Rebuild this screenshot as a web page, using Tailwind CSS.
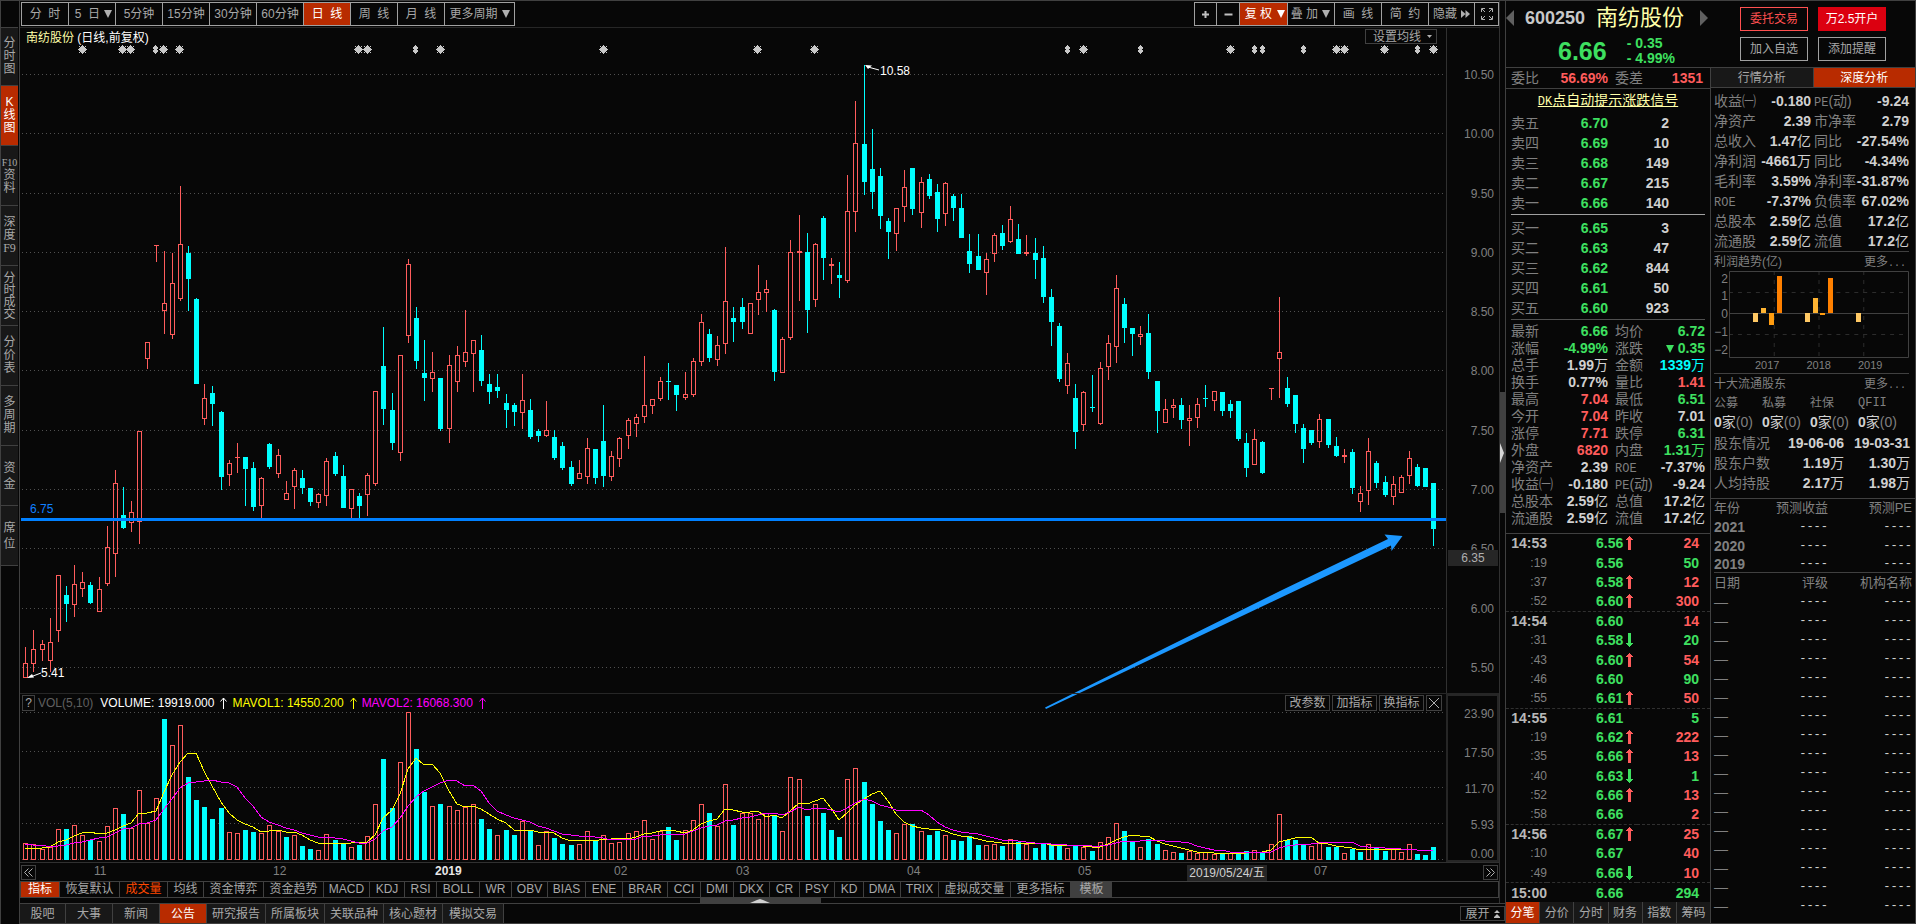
<!DOCTYPE html>
<html lang="zh-CN">
<head>
<meta charset="utf-8">
<title>南纺股份 600250</title>
<script src="https://cdn.jsdelivr.net/npm/@tailwindcss/browser@4"></script>
</head>
<body class="flex h-screen overflow-hidden border-t border-[#404040] bg-[#070707] font-['Liberation_Sans','Noto_Sans_CJK_SC',sans-serif] text-xs leading-4 text-[#a8a8a8]">

<!-- left rail -->
<nav class="flex w-5 shrink-0 flex-col border-x border-[#404040] pr-px text-center leading-[13px]">
  <div class="h-[27px] shrink-0 border-b border-[#404040]"></div>
  <button class="flex h-[58px] w-full items-center justify-center border-b border-[#404040] bg-[#181818] px-[2px]">分时图</button>
  <button class="flex h-[60px] w-full items-center justify-center border-b border-[#404040] bg-[#b82b00] px-[2px] text-white"><span>K<br>线图</span></button>
  <button class="flex h-[60px] w-full flex-col items-center justify-center border-b border-[#404040] bg-[#181818]"><span class="font-['Liberation_Serif'] text-[10px] leading-3">F10</span><span class="px-[2px]">资料</span></button>
  <button class="flex h-[60px] w-full flex-col items-center justify-center border-b border-[#404040] bg-[#181818]"><span class="px-[2px]">深度</span><span class="font-['Liberation_Serif']">F9</span></button>
  <button class="flex h-[60px] w-full items-center justify-center border-b border-[#404040] bg-[#181818] px-[2px] leading-3">分时成交</button>
  <button class="flex h-[60px] w-full items-center justify-center border-b border-[#404040] bg-[#181818] px-[2px]">分价表</button>
  <button class="flex h-[60px] w-full items-center justify-center border-b border-[#404040] bg-[#181818] px-[2px]">多周期</button>
  <button class="flex h-[60px] w-full items-center justify-center border-b border-[#404040] bg-[#181818] px-[2px] leading-4">资金</button>
  <button class="flex h-[60px] w-full items-center justify-center border-b border-[#404040] bg-[#181818] px-[2px] leading-4">席位</button>
</nav>

<main class="flex min-w-0 flex-1 flex-col border-b border-[#404040]">
 <div class="flex min-h-0 flex-1">
 <div class="flex min-w-0 flex-1 flex-col border-r border-[#303030]">
  <!-- toolbar -->
  <header class="flex h-[27px] shrink-0 items-start justify-between border-b border-[#262626] pl-px pt-px text-[#a8a8a8]">
    <div class="flex h-6 divide-x divide-[#a0a0a0] border border-[#a0a0a0]">
      <button class="w-[47px] whitespace-pre">分  时</button>
      <button class="flex w-[47px] items-center justify-end gap-1 whitespace-pre pr-[3px]"><span>5  日</span><svg class="size-2" viewBox="0 0 8 8" fill="#b0b0b0"><path d="M0 0h8L4 8z"/></svg></button>
      <button class="w-[47px]">5分钟</button>
      <button class="w-[47px]">15分钟</button>
      <button class="w-[47px]">30分钟</button>
      <button class="w-[47px]">60分钟</button>
      <button class="w-[47px] whitespace-pre bg-[#b82b00] text-white">日  线</button>
      <button class="w-[47px] whitespace-pre">周  线</button>
      <button class="w-[47px] whitespace-pre">月  线</button>
      <button class="flex w-[69px] items-center justify-center gap-1 whitespace-nowrap">更多周期<svg class="size-2" viewBox="0 0 8 8" fill="#b0b0b0"><path d="M0 0h8L4 8z"/></svg></button>
    </div>
    <div class="flex h-6 divide-x divide-[#a0a0a0] border border-[#a0a0a0]">
      <button class="flex w-[22px] items-center justify-center" aria-label="放大"><svg class="size-[9px]" viewBox="0 0 9 9" fill="#c0c0c0"><path d="M3.5 1h2v2.500h2.500v2h-2.500v2.500h-2v-2.500h-2.500v-2h2.500z"/></svg></button>
      <button class="flex w-[23px] items-center justify-center" aria-label="缩小"><svg class="size-[9px]" viewBox="0 0 9 9" fill="#c0c0c0"><path d="M.5 3.500h8v2h-8z"/></svg></button>
      <button class="flex w-[48px] items-center justify-end gap-[5px] whitespace-nowrap bg-[#b82b00] pr-[2px] text-white">复 权<svg class="size-2" viewBox="0 0 8 8" fill="#fff"><path d="M0 0h8L4 8z"/></svg></button>
      <button class="flex w-[47px] items-center justify-end gap-1 whitespace-nowrap pr-1">叠 加<svg class="size-2" viewBox="0 0 8 8" fill="#b0b0b0"><path d="M0 0h8L4 8z"/></svg></button>
      <button class="w-[47px] whitespace-pre">画  线</button>
      <button class="w-[47px] whitespace-pre">简  约</button>
      <button class="flex w-[46px] items-center justify-center gap-1">隐藏<svg class="h-2 w-[9px]" viewBox="0 0 9 8" fill="#b0b0b0"><path d="M0 0l4.500 4L0 8zM4.500 0L9 4 4.500 8z"/></svg></button>
      <button class="flex w-[23px] items-center justify-center" aria-label="全屏"><svg class="size-3" viewBox="0 0 12 12" fill="none" stroke="#b0b0b0"><path d="M.5 4V.5H4M1 1l3 3M8 .5h3.500V4M11 1L8 4M.5 8v3.500H4M1 11l3-3M11.500 8v3.500H8M11 11L8 8"/></svg></button>
    </div>
  </header>

  <!-- price and volume panes -->
  <div class="relative flex min-h-0 flex-1 flex-col">
    <div class="absolute inset-y-0 left-0 right-[53px]">
      <svg id="chart" class="h-full w-full" viewBox="20 28 1426 835" preserveAspectRatio="none" shape-rendering="crispEdges"></svg>
    </div>
    <div class="relative flex min-h-0 flex-1 border-b border-[#262626]">
      <div class="relative min-w-0 flex-1 pl-[6px]">
        <div class="flex items-start justify-between pr-[9px]">
          <h1 class="pt-[2px] text-[#ffffa8]">南纺股份 <span class="text-white">(日线,前复权)</span></h1>
          <button class="mt-px flex h-[15px] w-[72px] items-center justify-center gap-[6px] border border-[#404040] pl-[3px]">设置均线<svg class="h-[3px] w-[5px]" viewBox="0 0 5 3" fill="#b0b0b0"><path d="M0 0h5L2.500 3z"/></svg></button>
        </div>
        <span class="absolute left-[860px] top-[35px] text-white">10.58</span>
        <span class="absolute left-[10px] top-[473px] text-[#1080ff]">6.75</span>
        <span class="absolute left-[21px] top-[637px] text-white">5.41</span>
      </div>
      <div class="relative w-[53px] border-l border-[#303030] text-right text-[#808080]">
        <span class="absolute right-[5px] top-[39px]">10.50</span>
        <span class="absolute right-[5px] top-[98px]">10.00</span>
        <span class="absolute right-[5px] top-[158px]">9.50</span>
        <span class="absolute right-[5px] top-[217px]">9.00</span>
        <span class="absolute right-[5px] top-[276px]">8.50</span>
        <span class="absolute right-[5px] top-[335px]">8.00</span>
        <span class="absolute right-[5px] top-[395px]">7.50</span>
        <span class="absolute right-[5px] top-[454px]">7.00</span>
        <span class="absolute right-[5px] top-[513px]">6.50</span>
        <span class="absolute right-[5px] top-[573px]">6.00</span>
        <span class="absolute right-[5px] top-[632px]">5.50</span>
        <span class="absolute left-px right-px top-[522px] z-10 h-4 bg-[#262626] text-center text-[#b0b0b0]">6.35</span>
      </div>
    </div>
    <div class="relative flex h-[169px] shrink-0 border-b border-[#303030]">
      <div class="flex min-w-0 flex-1 items-start justify-between pl-[2px] pr-1 pt-px">
        <div class="flex items-center gap-[3px] whitespace-nowrap">
          <button class="h-4 w-[13px] border border-[#404040] leading-[14px]">?</button>
          <span class="text-[#606060]">VOL(5,10)</span>
          <span class="ml-1 text-white">VOLUME: 19919.000</span>
          <svg class="ml-[3px] h-3 w-[7px]" viewBox="0 0 7 12" fill="none" stroke="#fff"><path d="M3.500 12V1M.5 4.500l3-3.500 3 3.500"/></svg>
          <span class="ml-[2px] text-[#ff0]">MAVOL1: 14550.200</span>
          <svg class="ml-[3px] h-3 w-[7px]" viewBox="0 0 7 12" fill="none" stroke="#ff0"><path d="M3.500 12V1M.5 4.500l3-3.500 3 3.500"/></svg>
          <span class="ml-[2px] text-[#f0f]">MAVOL2: 16068.300</span>
          <svg class="ml-[3px] h-3 w-[7px]" viewBox="0 0 7 12" fill="none" stroke="#f0f"><path d="M3.500 12V1M.5 4.500l3-3.500 3 3.500"/></svg>
        </div>
        <div class="flex gap-[2px]">
          <button class="h-4 w-[45px] border border-[#404040] leading-[14px]">改参数</button>
          <button class="h-4 w-[45px] border border-[#404040] leading-[14px]">加指标</button>
          <button class="h-4 w-[45px] border border-[#404040] leading-[14px]">换指标</button>
          <button class="flex h-4 w-4 items-center justify-center border border-[#404040]" aria-label="关闭"><svg class="size-[10px]" viewBox="0 0 10 10" stroke="#b0b0b0"><path d="M0 0l10 10M10 0L0 10"/></svg></button>
        </div>
      </div>
      <div class="relative w-[53px] border-2 border-[#262626] text-[#808080]">
        <span class="absolute right-[3px] top-[10px]">23.90</span>
        <span class="absolute right-[3px] top-[49px]">17.50</span>
        <span class="absolute right-[3px] top-[85px]">11.70</span>
        <span class="absolute right-[3px] top-[121px]">5.93</span>
        <span class="absolute right-[3px] top-[150px]">0.00</span>
      </div>
    </div>
  </div>

  <!-- date axis -->
  <div class="relative flex h-[18px] shrink-0 items-center justify-between px-px text-[#808080]">
    <button class="flex h-[15px] w-[15px] items-center justify-center border border-[#404040]" aria-label="向左"><svg class="size-[9px]" viewBox="0 0 9 9" fill="none" stroke="#b0b0b0"><path d="M4.500.5l-4 4 4 4M8.500.5l-4 4 4 4"/></svg></button>
    <span class="absolute left-[74px] top-0">11</span>
    <span class="absolute left-[253px] top-0">12</span>
    <span class="absolute left-[415px] top-0 font-bold text-[#e8e8e8]">2019</span>
    <span class="absolute left-[594px] top-0">02</span>
    <span class="absolute left-[716px] top-0">03</span>
    <span class="absolute left-[887px] top-0">04</span>
    <span class="absolute left-[1058px] top-0">05</span>
    <span class="absolute left-[1294px] top-0">07</span>
    <span class="absolute left-[1167px] top-[2px] w-20 bg-[#262626] text-center text-[#d0d0d0]">2019/05/24/五</span>
    <button class="flex h-[15px] w-[15px] items-center justify-center border border-[#404040]" aria-label="向右"><svg class="size-[9px]" viewBox="0 0 9 9" fill="none" stroke="#b0b0b0"><path d="M.5.5l4 4-4 4M4.500.5l4 4-4 4"/></svg></button>
  </div>

  <!-- indicator tabs -->
  <div class="flex h-[17px] shrink-0 divide-x divide-[#404040] whitespace-nowrap border border-[#404040] leading-[15px]">
    <button class="w-[39px] bg-[#b82b00] text-white">指标</button>
    <button class="w-[60px]">恢复默认</button>
    <button class="w-12 text-[#ff4800]">成交量</button>
    <button class="w-9">均线</button>
    <button class="w-[60px]">资金博弈</button>
    <button class="w-[60px]">资金趋势</button>
    <button class="w-[46px]">MACD</button>
    <button class="w-[35px]">KDJ</button>
    <button class="w-8">RSI</button>
    <button class="w-[43px]">BOLL</button>
    <button class="w-8">WR</button>
    <button class="w-9">OBV</button>
    <button class="w-[38px]">BIAS</button>
    <button class="w-[37px]">ENE</button>
    <button class="w-[45px]">BRAR</button>
    <button class="w-[33px]">CCI</button>
    <button class="w-[33px]">DMI</button>
    <button class="w-9">DKX</button>
    <button class="w-[30px]">CR</button>
    <button class="w-[35px]">PSY</button>
    <button class="w-[29px]">KD</button>
    <button class="w-[37px]">DMA</button>
    <button class="w-[38px]">TRIX</button>
    <button class="w-[72px]">虚拟成交量</button>
    <button class="w-[60px]">更多指标</button>
    <button class="w-[41px] bg-[#404040]">模板</button>
  </div>
  <div class="flex h-[5px] shrink-0 justify-center pl-px">
    <button class="flex h-full w-[121px] items-end justify-center bg-[#404040]" aria-label="收起"><svg class="h-1 w-5" viewBox="0 0 20 4" fill="#d0d0d0"><path d="M0 4L7 1l3-1 3 1 7 3z"/></svg></button>
  </div>
 </div>
 <!-- side handle -->
 <div class="flex w-[5px] shrink-0 flex-col pt-[391px]">
   <button class="flex h-[121px] items-center bg-[#404040]" aria-label="展开侧栏"><svg class="h-5 w-[5px]" viewBox="0 0 5 20" fill="#d8d8d8"><path d="M0 0l2 5 2 5-2 5-2 5z"/></svg></button>
 </div>
 </div>

  <!-- bottom tabs -->
  <footer class="flex h-5 shrink-0 items-stretch justify-between border-t border-[#404040]">
    <div class="flex divide-x divide-[#404040] border-r border-[#404040] bg-[#181818]">
      <button class="w-[46px]">股吧</button>
      <button class="w-[47px]">大事</button>
      <button class="w-[47px]">新闻</button>
      <button class="w-[47px] bg-[#b82b00] text-white">公告</button>
      <button class="w-[59px]">研究报告</button>
      <button class="w-[59px]">所属板块</button>
      <button class="w-[59px]">关联品种</button>
      <button class="w-[59px]">核心题材</button>
      <button class="w-[60px]">模拟交易</button>
    </div>
    <button class="mt-[2px] flex h-[15px] w-[45px] items-center justify-center gap-1 self-start border border-[#404040]">展开<svg class="h-2 w-[6px]" viewBox="0 0 6 8" fill="#c0c0c0"><path d="M0 3h6L3 0zM0 7h6L3 4zM0 7h6v1H0z"/></svg></button>
  </footer>
</main>

<!-- quote panel -->
<aside class="flex min-h-0 w-[411px] shrink-0 flex-col overflow-hidden border-x border-b border-[#404040]">
  <header class="flex h-[67px] shrink-0 border-b border-[#404040]">
    <button class="mt-[9px] h-4 w-[9px]" aria-label="上一只"><svg class="h-4 w-[9px]" viewBox="0 0 9 16" fill="#606060"><path d="M8 0v16L0 8z"/></svg></button>
    <div class="w-[185px]">
      <div class="flex h-[33px] items-center gap-[11px] whitespace-nowrap pl-[10px]"><span class="text-lg font-bold text-[#c8c8c8]">600250</span><span class="text-[22px] text-[#ffffa8]">南纺股份</span></div>
      <div class="flex h-[33px] items-center gap-5 whitespace-nowrap pl-[43px] text-[#3ee060]"><span class="text-[25px] font-bold">6.66</span><span class="text-sm font-bold leading-[15px]">- 0.35<br>- 4.99%</span></div>
    </div>
    <button class="mt-[9px] h-4 w-[9px]" aria-label="下一只"><svg class="h-4 w-[9px]" viewBox="0 0 9 16" fill="#606060"><path d="M0 0v16l8-8z"/></svg></button>
    <div class="ml-[31px] mt-[6px] grid h-fit grid-cols-[68px_68px] gap-x-[10px] gap-y-[6px]">
      <button class="h-6 border border-[#ff5050] text-[#ff5050]">委托交易</button>
      <button class="h-6 bg-[#dc0010] text-white">万2.5开户</button>
      <button class="h-6 border border-[#a0a0a0]">加入自选</button>
      <button class="h-6 border border-[#a0a0a0]">添加提醒</button>
    </div>
  </header>
  <div class="flex min-h-0 flex-1 text-sm leading-4 text-[#808080]">
    <section class="flex w-[205px] shrink-0 flex-col border-r border-[#404040]">
      <table class="w-full table-fixed border-b border-[#404040]"><tbody><tr class="h-5">
        <th class="w-[40px] pl-[5px] text-left font-normal">委比</th><td class="w-[62px] text-right font-bold text-[#ff5c5c]">56.69%</td><th class="w-[40px] pl-[7px] text-left font-normal">委差</th><td class="pr-[7px] text-right font-bold text-[#ff5c5c]">1351</td>
      </tr></tbody></table>
      <a href="#" class="mt-[3px] block h-[21px] text-center text-[#ffffa8] underline underline-offset-1"><span class="font-['Liberation_Mono'] text-xs">DK</span>点自动提示涨跌信号</a>
      <div class="mx-[5px] border-b border-[#a0a0a0] pb-px"><table class="w-full table-fixed"><tbody id="asks"></tbody></table></div>
      <div class="mx-[5px] border-b border-[#505050] pb-px pt-[3px]"><table class="w-full table-fixed"><tbody id="bids"></tbody></table></div>
      <div class="border-b border-[#404040] pb-[6px] pt-[3px]"><table class="w-full table-fixed"><tbody id="detail"></tbody></table></div>
      <table class="min-h-0 w-full flex-1 table-fixed border-collapse"><tbody id="ticks"></tbody></table>
      <div class="flex h-[21px] shrink-0 divide-x divide-[#404040] bg-[#181818] text-xs text-[#a8a8a8]">
        <button class="flex-1 bg-[#b82b00] text-white">分笔</button>
        <button class="flex-1">分价</button>
        <button class="flex-1">分时</button>
        <button class="flex-1">财务</button>
        <button class="flex-1">指数</button>
        <button class="flex-1">筹码</button>
      </div>
    </section>
    <section class="flex min-w-0 flex-1 flex-col">
      <div class="flex h-5 shrink-0 border-b border-[#404040] text-xs text-[#a8a8a8]">
        <button class="flex-1 border-r border-[#404040] bg-[#181818]">行情分析</button>
        <button class="flex-1 bg-[#b82b00] text-white">深度分析</button>
      </div>
      <div class="pl-[3px] pr-[6px] pt-[3px]"><table class="w-full table-fixed border-b border-[#404040]"><tbody id="finance"></tbody></table></div>
      <div class="ml-[3px] mr-[6px] border-b border-[#404040] text-xs">
        <div class="flex h-[19px] items-center justify-between pr-[3px] pt-[2px]"><span>利润趋势(亿)</span><a href="#">更多<span class="font-['Liberation_Mono'] text-[10px] leading-none">...</span></a></div>
        <div class="flex">
          <div class="flex h-[87px] w-[15px] flex-col justify-between pr-px text-right"><span>2</span><span>1</span><span>0</span><span>−1</span><span>−2</span></div>
          <svg class="h-[87px] min-w-0 flex-1" viewBox="0 0 181 87" preserveAspectRatio="none" shape-rendering="crispEdges" fill="none" stroke="#404040">
            <path stroke="#2c2c2c" stroke-dasharray="4 5" d="M0 21.500h180M0 63.500h180M45.500 0v86M90.500 0v86M135.500 0v86"/>
            <path d="M.5.5h180v86H.5zM0 42.500h181"/>
            <g stroke="none"><path fill="#ffc864" d="M24 42h5v9h-5zM76 42h5v9h-5zM128 42h5v9h-5z"/><path fill="#ffb432" d="M32 37h5v5h-5zM84 27h5v15h-5z"/><path fill="#ff9c10" d="M40 42h5v12h-5zM92 42h5v2h-5z"/><path fill="#ff8000" d="M48 5h5v37h-5zM100 7h5v35h-5z"/></g>
          </svg>
        </div>
        <div class="flex h-[15px] gap-[25px] pl-[41px] text-[11px]"><span>2017</span><span class="pl-[2px]">2018</span><span class="pl-[2px]">2019</span></div>
      </div>
      <div class="ml-[3px] mr-[6px] flex h-5 items-center justify-between pr-[3px] text-xs"><span>十大流通股东</span><a href="#">更多<span class="font-['Liberation_Mono'] text-[10px] leading-none">...</span></a></div>
      <table class="ml-[3px] w-48 table-fixed text-xs">
        <thead><tr class="h-[19px]"><th class="text-left font-normal">公募</th><th class="text-left font-normal">私募</th><th class="text-left font-normal">社保</th><th class="text-left font-['Liberation_Mono'] font-normal">QFII</th></tr></thead>
        <tbody id="funds"></tbody>
      </table>
      <div class="border-b border-[#404040] px-[3px] pb-[5px]"><table class="w-full table-fixed"><tbody id="holders"></tbody></table></div>
      <table class="mx-[3px] table-fixed border-b border-[#404040]">
        <thead><tr class="h-[19px] text-[13px]"><th class="w-[60px] text-left font-normal">年份</th><th class="w-[54px] text-right font-normal">预测收益</th><th class="text-right font-normal">预测PE</th></tr></thead>
        <tbody id="forecast"></tbody>
      </table>
      <table class="mx-[3px] mt-px table-fixed">
        <thead><tr class="h-[19px] text-[13px]"><th class="w-[60px] text-left font-normal">日期</th><th class="w-[54px] text-right font-normal">评级</th><th class="text-right font-normal">机构名称</th></tr></thead>
        <tbody id="ratings"></tbody>
      </table>
    </section>
  </div>
</aside>

<script>
// Sessions: direction, high, body top, body bottom, low, volume top (chart units); trailing letter overrides the volume bar direction.
const sessions = `r647,663,678,678,843 r630,649,664,672,844 r640,644,650,661,849 r618,642,661,672,847 r575,575,631,642,829 c586,595,604,622,829 r565,584,605,617,825 r572,582,589,597,835 c582,585,603,604,840 r577,589,612,612,841
r526,547,584,586,826 r470,483,554,577,808 c487,515,528,529,814 r501,512,523,532,828 r431,431,522,544,790 r342,342,359,369,823 r245,245,246,262,798 r251,303,311,334,719c r253,283,335,339,745 r186,244,299,301,725
c246,253,279,311,777 c298,299,384,384,800 r384,398,419,425,807c c386,393,404,426,819 c411,412,477,490,808 r460,463,475,486,832 r443,457,458,473,833 c457,457,469,506,830 c462,468,507,511,832 r477,478,506,518,833
c443,444,467,469,825r r449,455,474,478,831 r481,493,500,500,837c r468,470,487,509,835 c470,478,488,494,846 c488,488,502,506,849 r493,494,503,508,850 r458,461,496,506,834 c452,456,474,476,840 c465,476,508,508,843
r489,489,509,518,847 c493,496,506,518,845 r473,475,495,516,836 r391,391,484,486,804 c327,366,409,425,759 c393,410,443,450,808 r355,355,453,461,762 r259,264,336,343,712 c307,318,361,369,749 c340,373,378,401,792
r352,372,379,392,806 c378,378,429,431,804 r355,365,429,443,806 r346,355,382,392,810 r310,352,362,367,807 r340,340,354,392,804 c335,350,381,386,819 c374,384,392,404,829 c374,387,391,398,835r c394,403,410,428,830
c403,405,412,426,835 r374,400,413,429,821 c399,410,437,439,830 c429,431,436,442,845r r401,430,436,437,831 c430,437,458,460,838 c442,446,468,470,844 c461,467,484,486,845 r460,473,479,479,844 r438,448,477,484,831
c449,449,478,484,840 c405,441,476,487,835r r451,456,477,481,843 r437,438,459,467,842 r418,420,436,449,833 r414,417,424,437,831 r356,405,417,423,820 r399,399,406,414,839 r377,381,399,401,831 c363,381,382,400,827
c385,385,395,411,840 r372,394,398,400,830 r358,361,395,397,820 r314,322,362,366,804 c329,334,358,362,813 r336,345,360,366,826 r247,301,344,354,784 c307,318,322,342,825 c298,307,322,329,813r r303,303,334,334,813
r265,292,300,315,819 r280,289,293,312,813 c309,310,372,381,815 r337,339,373,373,831 r240,252,338,340,777 r215,251,253,301,779 c233,252,310,333,816 r243,244,300,307,804 c216,218,258,280,813 r258,264,266,284,830c
c262,275,278,298,837 r175,211,281,283,779 r101,143,212,232,768 c65,144,182,195,782 c129,169,192,209,804 c168,176,216,229,821 c218,221,232,259,830 r208,208,234,251,833 r170,187,207,222,824 c168,168,209,215,824
r177,182,213,228,831 c174,179,196,199,835 c184,192,219,232,831 r182,183,214,226,835 c194,196,208,221,840 c194,208,238,238,841 c234,251,264,273,836 c234,256,270,270,845 r253,259,273,295,845 r233,235,254,262,844
c225,233,246,250,846 r206,219,242,243,839 c224,239,254,254,842 r235,252,254,256,844 c238,253,260,279,848 c246,258,297,303,844 c289,297,322,346,845 c323,326,379,382,845 r353,363,386,394,848 c384,398,432,449,845
r391,392,425,431,847 c375,407,408,412,851 r362,368,424,425,842 r335,343,367,380,837 r275,288,347,363,823 c298,304,328,343,831 c328,328,334,356,842 r326,334,337,345,847 c314,333,372,379,839 c381,381,411,433,844
r399,409,423,423,850 r399,405,408,418,852 c398,405,420,429,853 r405,418,421,446,851 r398,404,418,428,853 c385,398,399,407,852r r391,391,401,411,854 c392,392,411,416,853 c400,404,411,418,853r c401,401,439,441,853
c433,443,468,477,851 r429,439,465,465,850 c441,442,473,474,852 r388,388,389,400,844 r297,352,359,398,814 c377,388,404,407,840 c395,395,424,433,840 c424,428,449,463,845 c430,430,443,445,846r r414,419,442,448,843
c419,419,445,448,847 c437,446,456,457,847 r449,455,457,463,853 c449,452,488,494,849 r486,493,502,512,852c r438,451,491,505,844 c461,463,483,488,847 c476,482,495,497,851 r476,484,497,505,849 r475,477,493,493,852
r451,458,476,484,844 c464,467,486,487,854 c468,468,487,487,855 c483,483,529,546,847`.split(/\s+/).map(s => {
  const m = s.match(/^([rc])([\d,]+)([rc]?)$/), n = m[2].split(',').map(Number);
  return { up: m[1] === 'r', h: n[0], t: n[1], b: n[2], l: n[3], v: n[4], vup: (m[3] || m[1]) === 'r' };
});
const X = i => Math.round(25.3 + i * 8.139);
const RED = '#ff5c5c', CYAN = '#00ffff';
let out = '';
for (const y of [74, 133, 193, 252, 311, 370, 430, 489, 548, 608, 667, 712, 751, 787, 823, 859])
  out += `<path d="M22 ${y}.5H1446" stroke="#505050" stroke-dasharray="1 3"/>`;
const bar = (x, t, b, up) => !up || b - t < 3
  ? `<rect x="${x - 2}" y="${t}" width="5" height="${b - t}" fill="${up ? RED : CYAN}"/>`
  : `<rect x="${x - 1.5}" y="${t + .5}" width="4" height="${b - t - 1}" fill="none" stroke="${RED}"/>`;
sessions.forEach((s, i) => {
  const x = X(i), c = s.up ? RED : CYAN;
  out += `<path d="M${x + .5} ${s.h}V${s.t}M${x + .5} ${s.b}V${s.l}" stroke="${c}"/>` + bar(x, s.t, s.b, s.up) + bar(x, s.v, 860, s.vup);
});
const average = (n, lead) => sessions.map((s, i) => {
  const y = i < lead.length ? lead[i] : sessions.slice(i - n + 1, i + 1).reduce((a, k) => a + k.v, 0) / n;
  return `${X(i)},${Math.round(y)}`;
}).join(' ');
out += `<polyline points="${average(5, [849, 848, 848, 847])}" fill="none" stroke="#ff0"/>`;
out += `<polyline points="${average(10, [844, 845, 845, 847, 846, 845, 843, 842, 840])}" fill="none" stroke="#f0f"/>`;
for (const x of [82, 122, 130, 163, 179, 358, 367, 440, 603, 757, 814, 1083, 1230, 1336, 1344, 1384, 1433])
  out += `<path transform="translate(${x} 49)" fill="#c8c8c8" d="M-2-2H3V3H-2zM-4 0H5V1H-4zM0-4H1V5H0zM-3-3h1v1h-1zM3-3h1v1h-1zM-3 3h1v1h-1zM3 3h1v1h-1zM-3-1h1v3h-1zM3-1h1v3h-1zM-1-3h3v1h-3zM-1 3h3v1h-3z"/>`;
for (const x of [155, 415, 1067, 1140, 1254, 1262, 1303, 1417])
  out += `<path transform="translate(${x} 49)" fill="#c8c8c8" d="M0-4H1V5H0zM-1-3H2V4H-1zM-2-2H3V0H-2zM-2 1H3V3H-2z"/>`;
out += `<path d="M21 519.500H1446" stroke="#0080ff" stroke-width="3"/>`;
out += `<path shape-rendering="auto" fill="#1c98ff" d="M1045 707.500L1280 591 1388 539 1384.500 534.500 1402.500 536 1391.500 551 1391 545.500 1280 598 1046 709z"/>`;
out += `<path shape-rendering="auto" d="M41 673L33 676M879 70L868 67" stroke="#fff"/><path shape-rendering="auto" fill="#fff" d="M27 678l5-4 2 3.500zM865 65l7 .5-4 3.500z"/>`;
document.getElementById('chart').innerHTML = out;

const TONE = { g: 'text-[#3ee060]', r: 'text-[#ff5c5c]', w: 'text-[#d0d0d0]', c: 'text-[#00ffff]' };
const FALL = '<svg class="mr-1 inline-block size-2 align-baseline" viewBox="0 0 8 8" fill="#3ee060"><path d="M0 0h8L4 8z"/></svg>';
const unit = s => s.replace(/[万亿家]/g, '<span class="font-normal">$&</span>').replace('▼', FALL);
const name = s => s.replace(/ROE|PE/g, '<span class="font-[\'Liberation_Mono\'] text-xs leading-none">$&</span>');
const fill = (id, rows) => document.getElementById(id).innerHTML = rows.join('');

const level = ([n, p, q]) => `<tr class="h-5"><th class="w-[36px] text-left font-normal">${n}</th><td class="w-[61px] text-right font-bold text-[#3ee060]">${p}</td><td class="w-[61px] text-right font-bold text-[#d0d0d0]">${q}</td><td></td></tr>`;
fill('asks', [['卖五', '6.70', 2], ['卖四', '6.69', 10], ['卖三', '6.68', 149], ['卖二', '6.67', 215], ['卖一', '6.66', 140]].map(level));
fill('bids', [['买一', '6.65', 3], ['买二', '6.63', 47], ['买三', '6.62', 844], ['买四', '6.61', 50], ['买五', '6.60', 923]].map(level));

fill('detail', `最新 g6.66 均价 g6.72|涨幅 g-4.99% 涨跌 g▼0.35|总手 w1.99万 金额 c1339万|换手 w0.77% 量比 r1.41|最高 r7.04 最低 g6.51|今开 r7.04 昨收 w7.01|涨停 r7.71 跌停 g6.31|外盘 r6820 内盘 g1.31万|净资产 w2.39 ROE w-7.37%|收益㈠ w-0.180 PE(动) w-9.24|总股本 w2.59亿 总值 w17.2亿|流通股 w2.59亿 流值 w17.2亿`.split('|').map(r => {
  const [a, b, c, d] = r.split(' ');
  return `<tr class="h-[17px] whitespace-nowrap"><th class="w-[47px] pl-[5px] text-left font-normal">${name(a)}</th><td class="w-[55px] text-right font-bold ${TONE[b[0]]}">${unit(b.slice(1))}</td><th class="w-[48px] pl-[7px] text-left font-normal">${name(c)}</th><td class="pr-[5px] text-right font-bold ${TONE[d[0]]}">${unit(d.slice(1))}</td></tr>`;
}));

fill('finance', `收益㈠ -0.180 PE(动) -9.24|净资产 2.39 市净率 2.79|总收入 1.47亿 同比 -27.54%|净利润 -4661万 同比 -4.34%|毛利率 3.59% 净利率 -31.87%|ROE -7.37% 负债率 67.02%|总股本 2.59亿 总值 17.2亿|流通股 2.59亿 流值 17.2亿`.split('|').map(r => {
  const [a, b, c, d] = r.split(' ');
  return `<tr class="h-5 whitespace-nowrap"><th class="w-[42px] text-left font-normal">${name(a)}</th><td class="w-[55px] text-right font-bold text-[#d0d0d0]">${unit(b)}</td><th class="w-[44px] pl-[3px] text-left font-normal">${name(c)}</th><td class="text-right font-bold text-[#d0d0d0]">${unit(d)}</td></tr>`;
}));

const UP = '<svg class="ml-[3px] h-[14px] w-[7px] shrink-0" viewBox="0 0 7 14" fill="#ff5c5c" shape-rendering="crispEdges"><path d="M3 0h1v1h1v1h1v1h1v1H5v10H2V4H0V3h1V2h1V1h1z"/></svg>';
const DOWN = '<svg class="ml-[3px] h-[14px] w-[7px] shrink-0" viewBox="0 0 7 14" fill="#3ee060" shape-rendering="crispEdges"><path d="M3 14h1v-1h1v-1h1v-1h1v-1H5V0H2v10H0v1h1v1h1v1h1z"/></svg>';
fill('ticks', `14:53 6.56u r24|:19 6.56 g50|:37 6.58u r12|:52 6.60u r300|14:54 6.60 r14|:31 6.58d g20|:43 6.60u r54|:46 6.60 g90|:55 6.61u r50|14:55 6.61 g5|:19 6.62u r222|:35 6.66u r13|:40 6.63d g1|:52 6.66u r13|:58 6.66 r2|14:56 6.67u r25|:10 6.67 r40|:49 6.66d r10|15:00 6.66 g294`.split('|').map((r, i) => {
  const [t, p, q] = r.split(' ');
  const row = t[0] === ':' ? '' : i ? 'border-t border-dashed border-[#303030]' : '';
  const time = t[0] === ':' ? 'text-xs font-normal' : 'font-bold text-[#b8b8b8]';
  return `<tr class="h-[19px] ${row}"><th class="w-[41px] py-0 pl-[5px] text-right ${time}">${t}</th><td class="w-[90px] py-0 pl-[49px] font-bold text-[#3ee060]"><span class="flex items-center">${p.slice(0, 4)}${p[4] === 'u' ? UP : p[4] === 'd' ? DOWN : ''}</span></td><td class="py-0 pr-[11px] text-right font-bold ${TONE[q[0]]}">${q.slice(1)}</td></tr>`;
}));

fill('funds', ['<tr class="h-5">' + '<td class="whitespace-nowrap text-[14px]"><span class="text-[#d0d0d0]"><b>0</b>家</span>(0)</td>'.repeat(4) + '</tr>']);
fill('holders', [['股东情况', '19-06-06', '19-03-31'], ['股东户数', '1.19万', '1.30万'], ['人均持股', '2.17万', '1.98万']].map(([a, b, c]) =>
  `<tr class="h-5 whitespace-nowrap"><th class="w-[60px] text-left font-normal">${a}</th><td class="w-[70px] text-right font-bold text-[#d0d0d0]">${unit(b)}</td><td class="pr-[2px] text-right font-bold text-[#d0d0d0]">${unit(c)}</td></tr>`));
const dashes = '<td class="text-right font-[\'Liberation_Mono\'] text-xs text-[#d0d0d0]">----</td>';
fill('forecast', [['h-[19px]', 2021], ['h-[19px]', 2020], ['h-[16px]', 2019]].map(([h, y]) => `<tr class="${h}"><th class="text-left font-bold">${y}</th>${dashes}${dashes}</tr>`));
fill('ratings', Array(17).fill(`<tr class="h-[19px]"><th class="text-left font-normal">—</th>${dashes}${dashes}</tr>`));
</script>
</body>
</html>
